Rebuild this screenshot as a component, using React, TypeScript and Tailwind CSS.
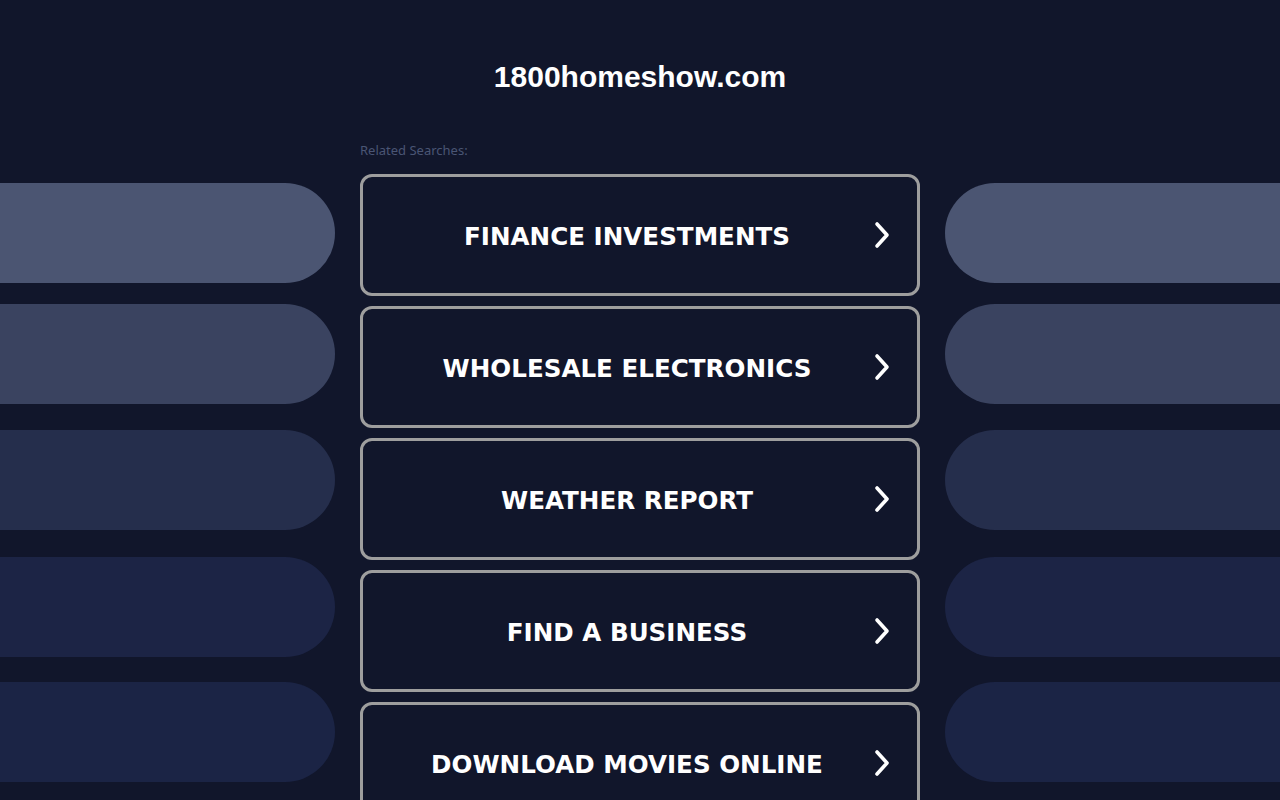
import React from "react";

const items = [
  "FINANCE INVESTMENTS",
  "WHOLESALE ELECTRONICS",
  "WEATHER REPORT",
  "FIND A BUSINESS",
  "DOWNLOAD MOVIES ONLINE",
];

function Chevron() {
  return (
    <svg width="18" height="28" viewBox="0 0 18 28" fill="none" className="shrink-0">
      <path d="M4 3 L14 14 L4 25" stroke="white" strokeWidth="3.6" strokeLinecap="round" strokeLinejoin="round" />
    </svg>
  );
}

function LeftPills() {
  return (
    <div className="flex flex-col w-[335px] shrink-0">
      <div className="mt-[183px] h-[100px] bg-[#4b5572] rounded-r-[50px]" />
      <div className="mt-[21px] h-[100px] bg-[#3a4360] rounded-r-[50px]" />
      <div className="mt-[26px] h-[100px] bg-[#252e4c] rounded-r-[50px]" />
      <div className="mt-[27px] h-[100px] bg-[#1c2445] rounded-r-[50px]" />
      <div className="mt-[25px] h-[100px] bg-[#1b2445] rounded-r-[50px]" />
    </div>
  );
}

function RightPills() {
  return (
    <div className="flex flex-col w-[335px] shrink-0">
      <div className="mt-[183px] h-[100px] bg-[#4b5572] rounded-l-[50px]" />
      <div className="mt-[21px] h-[100px] bg-[#3a4360] rounded-l-[50px]" />
      <div className="mt-[26px] h-[100px] bg-[#252e4c] rounded-l-[50px]" />
      <div className="mt-[27px] h-[100px] bg-[#1c2445] rounded-l-[50px]" />
      <div className="mt-[25px] h-[100px] bg-[#1b2445] rounded-l-[50px]" />
    </div>
  );
}

export default function App() {
  return (
    <div className="w-[1280px] h-[800px] overflow-hidden bg-[#11162b] flex gap-[25px]">
      <LeftPills />
      <div className="w-[560px] shrink-0 flex flex-col">
        <h1
          className="mt-[58px] h-[38px] leading-[38px] text-center text-white font-bold text-[30px]"
          style={{ fontFamily: '"Liberation Sans", Arial, sans-serif' }}
        >
          1800homeshow.com
        </h1>
        <div
          className="mt-[46px] text-[13px] leading-[16px] text-[#4a5574]"
          style={{ fontFamily: '"Noto Sans", Roboto, sans-serif' }}
        >
          Related Searches:
        </div>
        <div className="mt-[16px] flex flex-col gap-[10px]">
          {items.map((t) => (
            <div
              key={t}
              className="h-[122px] border-[3px] border-[#9e9e9e] rounded-[12px] flex items-center pl-[18px] pr-[26px]"
            >
              <span
                className="flex-1 pt-[4px] text-center text-white font-bold text-[24.6px]"
                style={{ fontFamily: '"DejaVu Sans", Verdana, sans-serif' }}
              >
                {t}
              </span>
              <Chevron />
            </div>
          ))}
        </div>
      </div>
      <RightPills />
    </div>
  );
}
